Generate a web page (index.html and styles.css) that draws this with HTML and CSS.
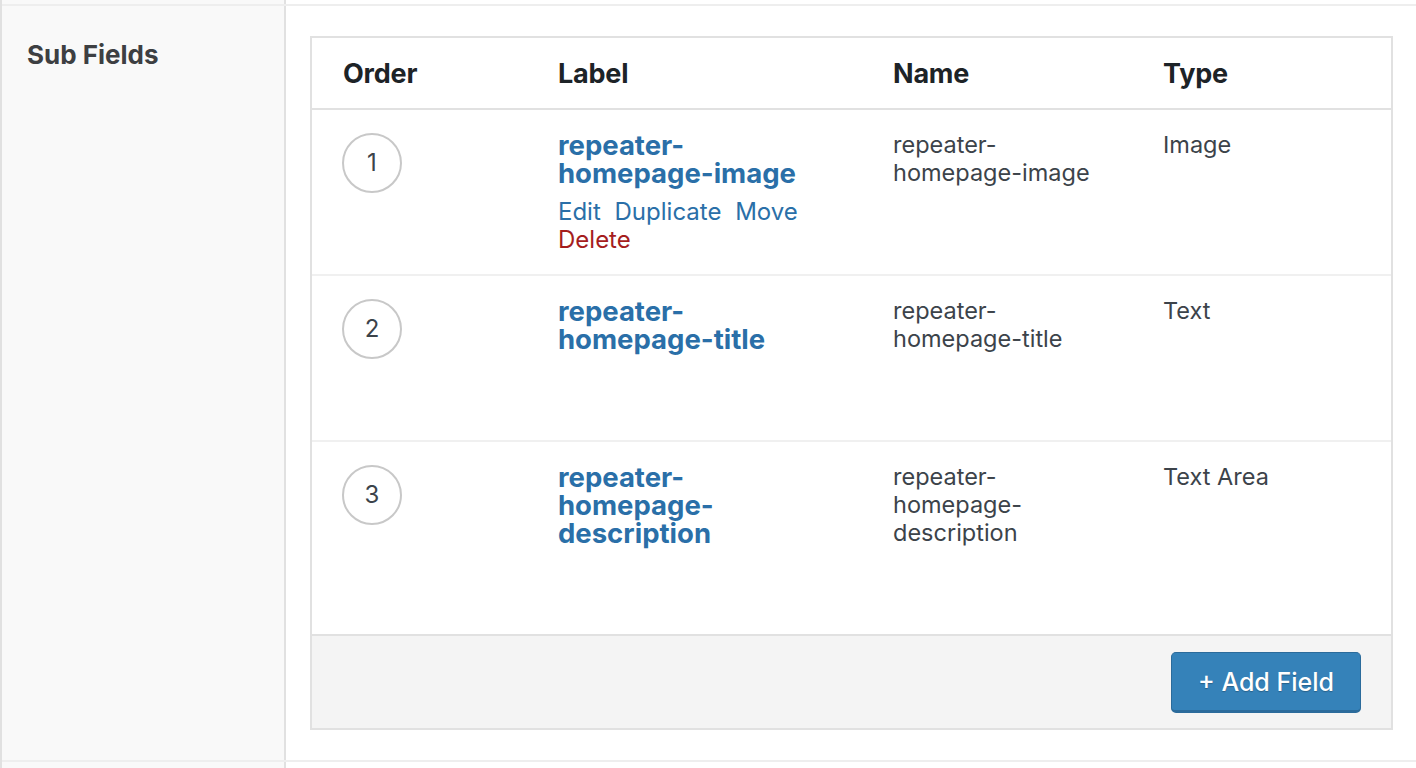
FILE: index.html
```html
<!DOCTYPE html>
<html>
<head>
<meta charset="utf-8">
<link rel="stylesheet" href="styles.css">
</head>
<body>
<div class="page">
  <div class="field-row prev">
    <div class="side"></div>
    <div class="main"></div>
  </div>
  <div class="field-row">
    <div class="side"><span class="side-label">Sub Fields</span></div>
    <div class="main">
      <div class="table">
        <div class="thead">
          <div class="cell">Order</div>
          <div class="cell">Label</div>
          <div class="cell">Name</div>
          <div class="cell">Type</div>
        </div>
        <div class="tbody">
          <div class="trow">
            <div class="cell"><span class="num">1</span></div>
            <div class="cell">
              <a class="title">repeater-<br>homepage-image</a>
              <div class="actions"><a>Edit</a> <a>Duplicate</a> <a>Move</a><br><a class="del">Delete</a></div>
            </div>
            <div class="cell text">repeater-<br>homepage-image</div>
            <div class="cell text">Image</div>
          </div>
          <div class="trow">
            <div class="cell"><span class="num">2</span></div>
            <div class="cell">
              <a class="title">repeater-<br>homepage-title</a>
              <div class="actions hidden"><a>Edit</a> <a>Duplicate</a> <a>Move</a><br><a class="del">Delete</a></div>
            </div>
            <div class="cell text">repeater-<br>homepage-title</div>
            <div class="cell text">Text</div>
          </div>
          <div class="trow">
            <div class="cell"><span class="num">3</span></div>
            <div class="cell">
              <a class="title">repeater-<br>homepage-<br>description</a>
              <div class="actions hidden"><a>Edit</a> <a>Duplicate</a> <a>Move</a><br><a class="del">Delete</a></div>
            </div>
            <div class="cell text">repeater-<br>homepage-<br>description</div>
            <div class="cell text">Text Area</div>
          </div>
        </div>
        <div class="tfoot">
          <button class="btn">+ Add Field</button>
        </div>
      </div>
    </div>
  </div>
  <div class="field-row next">
    <div class="side"></div>
    <div class="main"></div>
  </div>
</div>
</body>
</html>
```
FILE: styles.css
```css
html, body {
  margin: 0;
  padding: 0;
  background: #fff;
  font-family: Inter, "Noto Sans", "Liberation Sans", sans-serif;
}
.page {
  border-left: 2px solid #e1e1e1;
  height: 768px;
  overflow: hidden;
}
.field-row {
  display: flex;
  border-bottom: 2px solid #eeeeee;
}
.field-row.prev { height: 4px; }
.field-row.next { height: 20px; border-bottom: none; }
.side {
  width: 282px;
  flex: 0 0 282px;
  background: #f9f9f9;
  border-right: 2px solid #e1e1e1;
}
.side-label {
  display: block;
  padding: 35px 0 0 25px;
  font-size: 26px;
  font-weight: 700;
  line-height: 28px;
  color: #3d3f42;
}
.main {
  flex: 1;
  padding: 30px 23px 30px 24px;
}
.field-row.prev .main, .field-row.next .main { padding: 0; }
.table {
  border: 2px solid #e1e1e1;
}
.thead, .trow {
  display: grid;
  grid-template-columns: 215px 335px 270px 1fr;
}
.thead {
  height: 70px;
  border-bottom: 2px solid #e1e1e1;
  align-items: center;
}
.thead .cell {
  padding-left: 31px;
  font-size: 27px;
  font-weight: 700;
  color: #1d2327;
  letter-spacing: -0.2px;
}
.trow {
  border-bottom: 2px solid #f0f0f0;
}
.trow:last-child { border-bottom: 2px solid #e1e1e1; }
.trow .cell {
  padding: 21px 10px 20px 31px;
  font-size: 23.5px;
  line-height: 28px;
}
.num {
  display: flex;
  align-items: center;
  justify-content: center;
  width: 56px;
  height: 56px;
  margin-top: 2px;
  margin-left: -1px;
  border: 2px solid #c8c8c8;
  border-radius: 50%;
  font-size: 24px;
  color: #3c434a;
}
.title {
  display: block;
  font-size: 27.5px;
  font-weight: 700;
  color: #2a6fa8;
  line-height: 28px;
}
.actions {
  margin-top: 11px;
  color: #2a6fa8;
  font-size: 24px;
  word-spacing: 7px;
}
.actions.hidden { visibility: hidden; }
.actions .del { color: #a51d1d; }
.text {
  color: #3c434a;
}
.tfoot {
  background: #f4f4f4;
  height: 92px;
  display: flex;
  justify-content: flex-end;
  align-items: flex-start;
  padding: 16px 30px 0 0;
  box-sizing: border-box;
}
.btn {
  width: 190px;
  height: 61px;
  background: #3582b9;
  border: 1px solid #2b6b9b;
  border-bottom-width: 3px;
  border-radius: 5px;
  color: #fff;
  font-family: Inter, "Noto Sans", "Liberation Sans", sans-serif;
  font-size: 25px;
  font-weight: 500;
  text-shadow: 0 1px 1px rgba(0,0,0,0.25);
  padding: 0;
}
```
